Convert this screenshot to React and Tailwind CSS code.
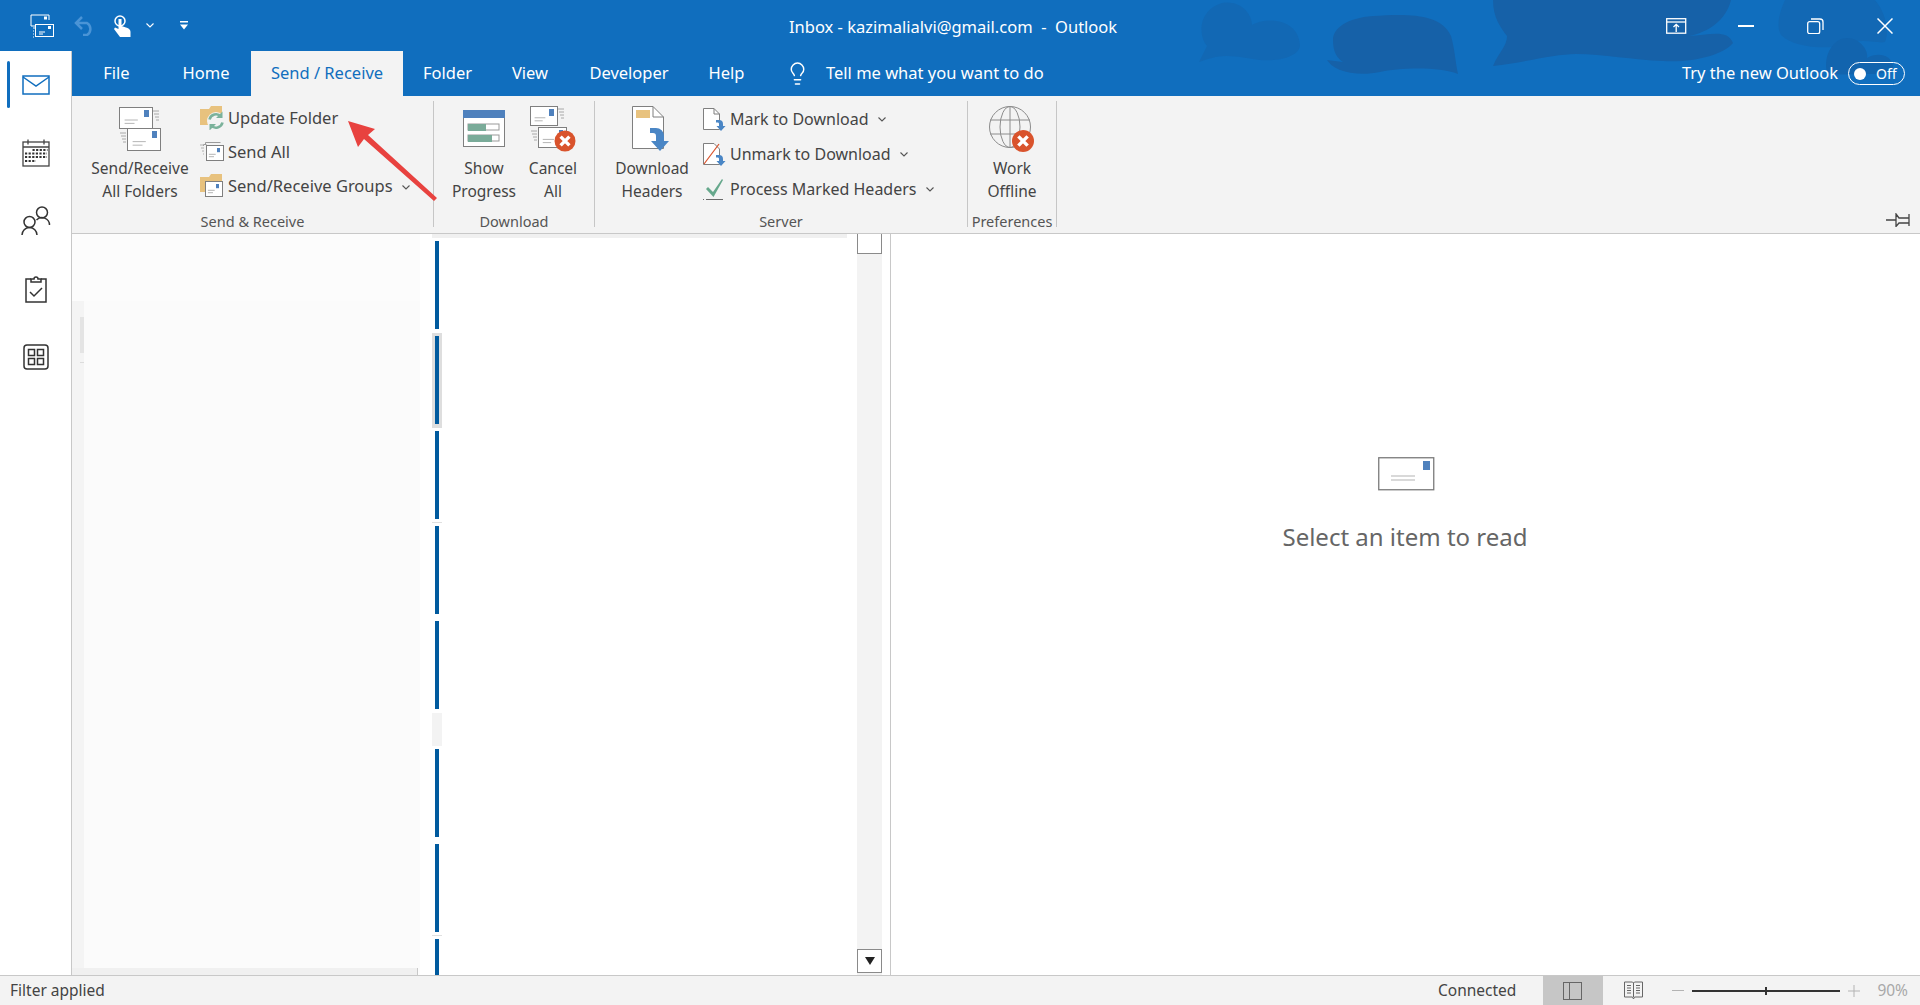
import React from 'react';
import { Lightbulb } from 'lucide-react';

const GRAY = '#7f7f7f';
const STAMP = '#4f81bd';

// envelope used by most of the ribbon icons
function Env({ x, y, w, h, stamp = 5 }) {
  const sh = stamp * 1.4;
  return (
    <g>
      <rect x={x + 0.5} y={y + 0.5} width={w} height={h} fill="#fff" stroke={GRAY} />
      <rect x={x + w - stamp - 3} y={y + 3} width={stamp} height={sh} fill={STAMP} />
      <path d={`M${x + w * 0.17} ${y + h * 0.62}h${w * 0.4}M${x + w * 0.17} ${y + h * 0.78}h${w * 0.3}`} stroke="#b5b5b5" />
    </g>
  );
}

function Speed({ x, y, w = 6, color = '#a8a8a8' }) {
  return (
    <path d={`M${x} ${y}h${w}M${x + 1} ${y + 3}h${w - 1}M${x + 2} ${y + 6}h${w - 2}M${x + 3} ${y + 9}h${w - 3}`} stroke={color} />
  );
}

function RedX({ cx, cy, r }) {
  const d = r * 0.42;
  return (
    <g>
      <circle cx={cx} cy={cy} r={r} fill="#d9532c" />
      <path d={`M${cx - d} ${cy - d}L${cx + d} ${cy + d}M${cx + d} ${cy - d}L${cx - d} ${cy + d}`} stroke="#fff" strokeWidth={r * 0.32} />
    </g>
  );
}

function SendReceiveIcon() {
  return (
    <svg width="44" height="46" viewBox="0 0 44 46">
      <Env x={1} y={1} w={33} h={21} />
      <Speed x={35} y={5} />
      <Env x={9} y={22} w={33} h={22} />
      <Speed x={2} y={27} />
    </svg>
  );
}

function Folder({ w = 22, h = 19 }) {
  return <path d={`M0 3h9l2-3h${w - 11}v${h}H0z`} fill="#e8c27e" />;
}

function UpdateFolderIcon() {
  return (
    <svg width="26" height="24" viewBox="0 0 26 24">
      <Folder />
      <circle cx="16" cy="15" r="9" fill="#f3f3f3" />
      <path d="M9.5 13.5a6.7 6.7 0 0 1 11.5-3M22.5 16.5a6.7 6.7 0 0 1-11.5 3" fill="none" stroke="#7bb29b" strokeWidth="2.6" />
      <path d="M22.5 5.5v6.5h-6.5zM9.5 24.5v-6.5h6.5z" fill="#7bb29b" />
    </svg>
  );
}

function SendAllIcon() {
  return (
    <svg width="26" height="22" viewBox="0 0 26 22">
      <path d="M5.5 3V1.5h15M3.5 5V3.5h3" fill="none" stroke="#9a9a9a" />
      <Speed x={0} y={4} w={4} color="#b0b0b0" />
      <Env x={6} y={4} w={17} h={15} stamp={3} />
    </svg>
  );
}

function GroupsIcon() {
  return (
    <svg width="26" height="24" viewBox="0 0 26 24">
      <Folder h={18} />
      <Env x={5} y={7} w={17} h={15} stamp={3} />
    </svg>
  );
}

function ProgressIcon() {
  return (
    <svg width="43" height="38" viewBox="0 0 43 38">
      <rect x="0.5" y="0.5" width="41" height="36" fill="#fff" stroke={GRAY} />
      <rect x="0" y="0" width="42" height="8" fill={STAMP} />
      <rect x="5" y="14" width="31" height="6" fill="#fff" stroke="#9a9a9a" />
      <rect x="5" y="14" width="18" height="7" fill="#7aab99" />
      <rect x="5" y="25" width="31" height="6" fill="#fff" stroke="#9a9a9a" />
      <rect x="5" y="25" width="24" height="7" fill="#7aab99" />
    </svg>
  );
}

function CancelAllIcon() {
  return (
    <svg width="46" height="46" viewBox="0 0 46 46">
      <Env x={0} y={0} w={27} h={19} stamp={5} />
      <Speed x={28} y={3} />
      <Env x={8} y={21} w={28} h={20} stamp={4} />
      <Speed x={1} y={25} />
      <RedX cx={35} cy={35} r={10.5} />
    </svg>
  );
}

function DownloadHeadersIcon() {
  return (
    <svg width="40" height="46" viewBox="0 0 40 46">
      <path d="M0.5 0.5H21L31.5 11V42.5H0.5z" fill="#fff" stroke={GRAY} />
      <path d="M21 0.5V11H31.5" fill="none" stroke={GRAY} />
      <rect x="4" y="4" width="14" height="8" fill="#e8c27e" />
      <path d="M18 22h6a8 8 0 0 1 8 8v5h5l-9 10-9-10h5v-5c0-2-1-3-3-3h-3z" fill="#4a86c5" />
    </svg>
  );
}

function MarkIcon({ unmark }) {
  return (
    <svg width="24" height="24" viewBox="0 0 24 24">
      <path d="M0.5 1.5H11L16.5 7V22.5H0.5z" fill="#fff" stroke={GRAY} />
      {unmark ? <path d="M1 22L16 2" stroke="#d9532c" strokeWidth="1.2" /> : <path d="M11 1.5V7H16.5" fill="none" stroke={GRAY} />}
      <path d="M13 13h3a4 4 0 0 1 4 4v2h2.500l-4.500 5-4.500-5h2.500v-2c0-1-0.500-1.500-1.500-1.500h-1.500z" fill="#4a86c5" />
    </svg>
  );
}

function ProcessIcon() {
  return (
    <svg width="24" height="24" viewBox="0 0 24 24">
      <path d="M5 10l5 5 9-13 1 1-9.500 17L3 12z" fill="#66a88c" />
      <path d="M3 22.500h17" stroke="#6a6a6a" />
      <path d="M0 22.500h1" stroke="#6a6a6a" />
    </svg>
  );
}

function GlobeIcon() {
  return (
    <svg width="46" height="46" viewBox="0 0 46 46">
      <g fill="none" stroke="#8c8c8c">
        <circle cx="21" cy="21" r="20.500" />
        <ellipse cx="21" cy="21" rx="10" ry="20.500" />
        <path d="M21 0.500V41.500M1 14h40M1 28h40" />
      </g>
      <RedX cx={34} cy={35} r={11} />
    </svg>
  );
}

function Chevron({ className = 'text-[#555]' }) {
  return (
    <svg width="8" height="5" viewBox="0 0 8 5" className={className}>
      <path d="M0.500 0.500L4 4l3.500-3.500" fill="none" stroke="currentColor" strokeWidth="1.100" />
    </svg>
  );
}

function LargeButton({ icon, lines, className }) {
  return (
    <div className={`flex flex-col items-center ${className}`}>
      <div className="h-[56px] flex items-center justify-center">{icon}</div>
      {lines.map((l) => (
        <div key={l} className="leading-[23px] whitespace-nowrap">{l}</div>
      ))}
    </div>
  );
}

function SmallButton({ icon, label, chevron, rowClass }) {
  return (
    <div className={`flex items-center ${rowClass}`}>
      <div className="w-[26px] flex justify-center">{icon}</div>
      <span className="ml-[2px] whitespace-nowrap">{label}</span>
      {chevron && <Chevron className="ml-[9px] mt-[2px] text-[#555]" />}
    </div>
  );
}

function Group({ label, className, children }) {
  return (
    <div className={`h-[126px] mt-[5px] border-r border-[#c6c6c6] flex flex-col ${className}`}>
      <div className="h-[112px] flex">{children}</div>
      <div className="h-[14px] leading-[16px] text-center text-[14.500px] text-[#555] whitespace-nowrap">{label}</div>
    </div>
  );
}

function TitleDecor() {
  return (
    <svg className="absolute top-0 right-0" width="760" height="96" viewBox="0 0 760 96">
      <g fill="#1268b4">
        <path d="M39 62l8-16C38 36 38 10 62 3c20-3 30 12 30 22 12-8 46-8 48 20 0 10-18 17-40 15-10-1-20-4-34-4-10 0-18 3-27 6z" />
        <path d="M625 0h90c10 12 15 30 10 42-8 2-24-5-40 3-16 4-50 4-64-10-6-10 0-26 4-35z" />
      </g>
      <g fill="#1661a8">
        <path d="M167 60l16 2c-6-4-10-10-10-22 0-12 14-22 40-24 30-2 68-4 78 20 4 14 4 24 7 38-20-8-60-6-78-2-14 3-30 2-40-2-7-3-10-6-13-10z" />
        <path d="M333 0h238c-5 20-22 32-42 36 18 0 38-8 44 7-10 12-40 20-70 18-30-1-60-7-87-7-20 0-50 8-83 12 6-14 14-20 14-30-6-8-14-18-14-36z" />
      </g>
      <path d="M667 72c-4-16 6-34 20-34s22 14 20 20c10-6 24-4 26 8 0 8-14 8-30 8-14 0-24 2-36-2z" fill="#1264ae" />
    </svg>
  );
}

function TitleBar() {
  return (
    <div className="h-[51px] flex items-center text-white">
      {/* quick access */}
      <svg className="ml-[30px]" width="24" height="24" viewBox="0 0 24 24" fill="none" stroke="#fff">
        <path d="M5 12H1V1h18v5" />
        <rect x="5.500" y="10.500" width="18" height="12" fill="#106ebe" />
        <path d="M9 18h6M9 20h4M3 14h2M3 17h1M3 20h1M3 23h1" strokeWidth="1" />
        <rect x="18" y="12" width="3" height="3" fill="#fff" stroke="none" />
        <rect x="14" y="2.500" width="3" height="3" fill="#fff" stroke="none" />
      </svg>
      <svg className="ml-[20px]" width="22" height="20" viewBox="0 0 22 20" fill="none" stroke="#4a94d6" strokeWidth="2.500">
        <path d="M8 1L2 7l6 6M2 7h11a7 7 0 0 1 0 12H9" />
      </svg>
      <svg className="ml-[17px]" width="18" height="22" viewBox="0 0 18 22">
        <circle cx="7" cy="6" r="5" fill="none" stroke="#fff" strokeWidth="1.500" />
        <path d="M5.500 4h3v7l6 2c2 1 3 2 3 4v5H7L1 14l1-1.500 3.500 1.500z" fill="#fff" />
      </svg>
      <Chevron className="ml-[15px] text-white" />
      <svg className="ml-[26px]" width="8" height="9" viewBox="0 0 8 9">
        <path d="M0 0h8v1.500H0zM0 3.500h8L4 8.500z" fill="#fff" />
      </svg>
      <div className="absolute left-[789px] top-[17px] text-[16.500px] leading-[20px] whitespace-pre">Inbox - kazimalialvi@gmail.com  -  Outlook</div>
      {/* window controls */}
      <div className="ml-auto flex items-center">
        <svg width="21" height="16" viewBox="0 0 21 16" fill="none" stroke="#fff" strokeWidth="1.300">
          <rect x="0.700" y="0.700" width="19" height="14.500" />
          <path d="M0.700 4h19" />
          <path d="M10.200 14V7M7.500 9l2.700-2.700L13 9" />
        </svg>
        <div className="ml-[51px] w-[16px] h-[2px] bg-white"></div>
        <svg className="ml-[53px]" width="17" height="16" viewBox="0 0 17 16" fill="none" stroke="#fff" strokeWidth="1.300">
          <rect x="0.700" y="3.700" width="12" height="12" rx="2" />
          <path d="M4 1h9a3 3 0 0 1 3 3v8" />
        </svg>
        <svg className="ml-[53px] mr-[27px]" width="16" height="16" viewBox="0 0 16 16" stroke="#fff" strokeWidth="1.500">
          <path d="M0.500 0.500l15 15M15.500 0.500l-15 15" />
        </svg>
      </div>
    </div>
  );
}

const tabs = [
  { label: 'File', w: 'w-[89px]', extra: 'pl-[1px]' },
  { label: 'Home', w: 'w-[90px]' },
  { label: 'Send / Receive', w: 'w-[152px]', active: true },
  { label: 'Folder', w: 'w-[89px]' },
  { label: 'View', w: 'w-[76px]' },
  { label: 'Developer', w: 'w-[122px]' },
  { label: 'Help', w: 'w-[73px]' },
];

function Ribbon() {
  return (
    <div className="h-[138px] bg-[#f3f3f3] border-b border-[#c8c8c8] flex text-[15.500px] text-[#444] relative">
      <Group label="Send & Receive" className="w-[362px]">
        <LargeButton className="w-[112px] ml-[12px]" icon={<SendReceiveIcon />} lines={['Send/Receive', 'All Folders']} />
        <div className="flex flex-col ml-[4px] text-[16.500px]">
          <SmallButton rowClass="h-[34px]" icon={<UpdateFolderIcon />} label="Update Folder" />
          <SmallButton rowClass="h-[34px]" icon={<SendAllIcon />} label="Send All" />
          <SmallButton rowClass="h-[34px]" icon={<GroupsIcon />} label="Send/Receive Groups" chevron />
        </div>
      </Group>
      <Group label="Download" className="w-[161px]">
        <LargeButton className="w-[72px] ml-[14px]" icon={<ProgressIcon />} lines={['Show', 'Progress']} />
        <LargeButton className="w-[66px]" icon={<CancelAllIcon />} lines={['Cancel', 'All']} />
      </Group>
      <Group label="Server" className="w-[373px]">
        <LargeButton className="w-[100px] ml-[7px]" icon={<DownloadHeadersIcon />} lines={['Download', 'Headers']} />
        <div className="flex flex-col text-[16px]">
          <SmallButton rowClass="h-[35px]" icon={<MarkIcon />} label="Mark to Download" chevron />
          <SmallButton rowClass="h-[35px]" icon={<MarkIcon unmark />} label="Unmark to Download" chevron />
          <SmallButton rowClass="h-[35px]" icon={<ProcessIcon />} label="Process Marked Headers" chevron />
        </div>
      </Group>
      <Group label="Preferences" className="w-[89px]">
        <LargeButton className="w-[88px]" icon={<GlobeIcon />} lines={['Work', 'Offline']} />
      </Group>
      <svg className="ml-auto mr-[10px] mt-[117px]" width="24" height="14" viewBox="0 0 24 14" fill="none" stroke="#444" strokeWidth="1.300">
        <path d="M0 7h10M10 1l3 4h10v-4v12v-3H13l-3 3.500z" />
      </svg>
    </div>
  );
}

function RailItem({ active, children }) {
  return (
    <div className="relative h-[68px] flex items-center justify-center">
      {active && <div className="absolute left-[7px] top-[10px] w-[3px] h-[47px] rounded-full bg-[#106ebe]"></div>}
      {children}
    </div>
  );
}

function Rail() {
  return (
    <div className="w-[72px] shrink-0 border-r border-[#c8c8c8] bg-white flex flex-col">
      <RailItem active>
        <svg width="28" height="20" viewBox="0 0 28 20" fill="none" stroke="#106ebe" strokeWidth="1.500">
          <rect x="1" y="1" width="26" height="18" />
          <path d="M1 2l13 9 13-9" />
        </svg>
      </RailItem>
      <RailItem>
        <svg width="28" height="28" viewBox="0 0 28 28" fill="none" stroke="#444" strokeWidth="1.300">
          <rect x="1" y="3" width="26" height="24" />
          <path d="M1 8h26M6 0.500v5M22 0.500v5" />
          <path d="M10.500 11h15M3 14.500h22M3 18h22M3 22h11" stroke="#333" strokeWidth="2.200" strokeDasharray="2.200 1.400" />
        </svg>
      </RailItem>
      <RailItem>
        <svg width="30" height="30" viewBox="0 0 30 30" fill="none" stroke="#333" strokeWidth="1.500">
          <circle cx="8.500" cy="16" r="5.500" />
          <path d="M1 29a7.500 7.500 0 0 1 15 0" />
          <circle cx="21" cy="6.500" r="5.500" />
          <path d="M15.500 14a7.500 7.500 0 0 1 13 5" />
        </svg>
      </RailItem>
      <RailItem>
        <svg width="24" height="28" viewBox="0 0 24 28" fill="none" stroke="#333" strokeWidth="1.500">
          <path d="M7 4H2v23h20V4h-5" />
          <path d="M7 7V4h3a2 2 0 0 1 4 0h3v3z" />
          <path d="M6 17l4 4 8-8" />
        </svg>
      </RailItem>
      <RailItem>
        <svg width="26" height="26" viewBox="0 0 26 26" fill="none" stroke="#333" strokeWidth="1.500">
          <rect x="1" y="1" width="24" height="24" rx="3" />
          <rect x="5.500" y="5.500" width="6" height="6" />
          <rect x="14.500" y="5.500" width="6" height="6" />
          <rect x="5.500" y="14.500" width="6" height="6" />
          <rect x="14.500" y="14.500" width="6" height="6" />
        </svg>
      </RailItem>
    </div>
  );
}

function FolderPane() {
  return (
    <div className="w-[348px] shrink-0 flex flex-col bg-[#fcfcfc]">
      <div className="h-[67px] shrink-0 border-r-0"></div>
      <div className="flex-1 flex min-h-0">
        <div className="w-[12px] bg-[#f4f4f4] flex flex-col items-end">
          <div className="mt-[16px] w-[4px] h-[36px] bg-[#e4e4e4]"></div>
          <div className="mt-[9px] w-[4px] h-px bg-[#dcdcdc]"></div>
        </div>
        <div className="flex-1 bg-[#fbfbfb]"></div>
      </div>
      <div className="h-[7px] shrink-0 bg-[#f0f0f0] w-[346px] border-r border-[#c8c8c8]"></div>
    </div>
  );
}

const bars = [
  { h: 'h-[95px]' },
  { h: 'h-[95px]', selected: true },
  { h: 'h-[95px]', line: true },
  { h: 'h-[95px]' },
  { h: 'h-[95px]' },
  { h: 'h-[33px]', empty: true },
  { h: 'h-[95px]' },
  { h: 'h-[95px]', line: true },
  { h: 'h-[95px]' },
];

function MessageList() {
  return (
    <div className="w-[470px] shrink-0 flex overflow-hidden bg-white">
      <div className="flex-1 pl-[12px] min-w-0">
        <div className="h-[4px] mr-[10px] bg-[#f0f0f0]"></div>
        {bars.map((b, i) => (
          <div
            key={i}
            className={`w-[10px] px-[3px] pt-[3px] ${b.h} ${b.selected ? 'bg-[#dedede]' : ''} ${b.empty ? 'bg-[#f3f3f3]' : ''} ${b.line ? 'border-b border-[#e0e0e0]' : ''}`}
          >
            {!b.empty && <div className="w-[4px] h-[88px] bg-[#005a9e]"></div>}
          </div>
        ))}
      </div>
      <div className="w-[25px] bg-[#f3f3f3] flex flex-col justify-between pb-[2px]">
        <div className="h-[20px] bg-white border border-t-0 border-[#8a8a8a]"></div>
        <div className="h-[24px] bg-white border border-[#8a8a8a] flex items-center justify-center">
          <svg width="10" height="8" viewBox="0 0 10 8"><path d="M0 0h10L5 8z" fill="#222" /></svg>
        </div>
      </div>
      <div className="w-[8px]"></div>
    </div>
  );
}

function ReadingPane() {
  return (
    <div className="flex-1 border-l border-[#c8c8c8] bg-white flex flex-col items-center pt-[223px]">
      <svg className="ml-[1px]" width="57" height="34" viewBox="0 0 57 34">
        <rect x="0.750" y="0.750" width="55" height="32" fill="#fff" stroke="#7a7a7a" strokeWidth="1.300" />
        <rect x="45" y="4" width="7" height="9" fill={STAMP} />
        <path d="M13 19h24M13 23h24" stroke="#b3b3b3" />
      </svg>
      <div className="mt-[30px] text-[24px] leading-[32px] text-[#666] ml-[-1px] whitespace-nowrap">Select an item to read</div>
    </div>
  );
}

function StatusBar() {
  return (
    <div className="h-[30px] shrink-0 bg-[#f3f3f3] border-t border-[#c8c8c8] flex items-center text-[15.500px] text-[#444]">
      <span className="ml-[10px]">Filter applied</span>
      <span className="ml-auto">Connected</span>
      <div className="ml-[27px] w-[60px] h-full bg-[#c6c6c6] flex items-center justify-center">
        <svg width="20" height="18" viewBox="0 0 20 18" fill="none" stroke="#666">
          <rect x="0.500" y="0.500" width="18" height="17" />
          <path d="M6.500 0.500v17" />
        </svg>
      </div>
      <svg className="ml-[21px]" width="20" height="19" viewBox="0 0 20 19" fill="none" stroke="#666">
        <path d="M0.500 1h8l1 1 1-1h8v15h-8l-1 2-1-2h-8zM9.500 2v14" />
        <path d="M3 4.500h4M3 7h4M3 9.500h4M3 12h4M12 4.500h4M12 7h4M12 9.500h4M12 12h4" />
      </svg>
      <div className="ml-[28px] w-[12px] h-px bg-[#b3b3b3]"></div>
      <div className="ml-[8px] w-[148px] h-[2px] bg-[#333] relative">
        <div className="absolute left-[73px] top-[-3px] w-[2px] h-[8px] bg-[#333]"></div>
      </div>
      <svg className="ml-[8px]" width="12" height="12" viewBox="0 0 12 12" stroke="#b3b3b3"><path d="M0 6h12M6 0v12" /></svg>
      <span className="ml-[17px] mr-[12px] text-[#a8a8a8]">90%</span>
    </div>
  );
}

function App() {
  return (
    <div className="relative w-[1920px] h-[1005px] overflow-hidden flex flex-col bg-white font-['Noto_Sans','Open_Sans',sans-serif]">
      {/* blue band behind title and tabs */}
      <div className="absolute top-0 left-0 w-full h-[96px] bg-[#106ebe]">
        <TitleDecor />
      </div>
      <div className="relative">
        <TitleBar />
      </div>
      <div className="relative flex-1 flex min-h-0">
        <Rail />
        <div className="flex-1 flex flex-col min-w-0">
          <div className="h-[45px] flex items-stretch text-[16.500px] text-white">
            {tabs.map((t) => (
              <div
                key={t.label}
                className={`${t.w} flex items-center justify-center ${t.active ? 'bg-[#f3f3f3] text-[#106ebe]' : ''}`}
              >
                {t.label}
              </div>
            ))}
            <div className="ml-[22px] flex items-center">
              <Lightbulb size={25} strokeWidth={1.4} />
              <span className="ml-[16px]">Tell me what you want to do</span>
            </div>
            <div className="ml-auto flex items-center">
              <span>Try the new Outlook</span>
              <div className="ml-[10px] mr-[15px] w-[57px] h-[23px] rounded-full border border-white flex items-center">
                <div className="ml-[5px] w-[12px] h-[12px] rounded-full bg-white"></div>
                <span className="ml-[10px] text-[14px]">Off</span>
              </div>
            </div>
          </div>
          <Ribbon />
          <div className="flex-1 flex min-h-0">
            <FolderPane />
            <MessageList />
            <ReadingPane />
          </div>
        </div>
      </div>
      <div className="relative">
        <StatusBar />
      </div>
      {/* red callout arrow */}
      <svg className="absolute left-[340px] top-[115px]" width="105" height="90" viewBox="0 0 105 90">
        <path d="M8 6L35 14 28 20 97 83 94 86 24 24 18 32z" fill="#e8423f" />
      </svg>
    </div>
  );
}

export default App;
